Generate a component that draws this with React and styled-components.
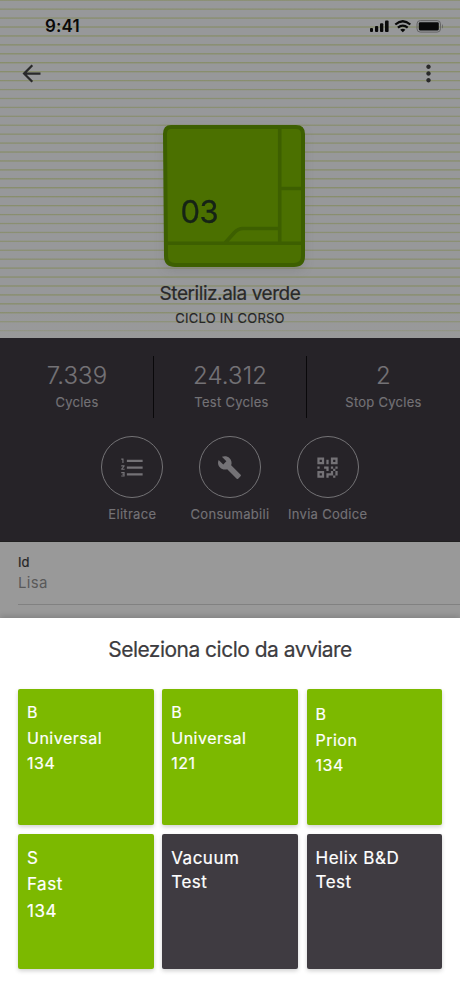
import React from "react";
import styled, { createGlobalStyle } from "styled-components";
import { MdFormatListNumbered, MdBuild, MdArrowBack, MdMoreVert } from "react-icons/md";

const GlobalStyle = createGlobalStyle`
  * { box-sizing: border-box; }
  body { margin: 0; font-family: Inter, "Liberation Sans", sans-serif; }
`;

const Screen = styled.main`
  display: flex;
  flex-direction: column;
  width: 460px;
  height: 996px;
  overflow: hidden;
  background: #999;
`;

const Hero = styled.section`
  height: 338px;
  flex: none;
  display: flex;
  flex-direction: column;
  align-items: center;
  background:
    linear-gradient(to bottom, transparent 310px, rgba(154, 154, 154, 0.75) 338px),
    repeating-linear-gradient(to bottom, #888e6c 0, #8d917a 0.7px, #97989a 1.4px, #97989a 8.1px, #888e6c 8.93px);
`;

const StatusBar = styled.header`
  align-self: stretch;
  height: 52px;
  padding: 0 17px 0 45px;
  display: flex;
  align-items: center;
  justify-content: space-between;
  color: #090909;
`;

const Clock = styled.time`
  font-size: 17px;
  line-height: 20px;
  font-weight: 600;
  letter-spacing: 0.1px;
`;

const StatusIcons = styled.svg`
  display: block;
  width: 75px;
  height: 14px;
`;

const NavBar = styled.nav`
  align-self: stretch;
  height: 43px;
  padding: 0 18px;
  display: flex;
  align-items: center;
  justify-content: space-between;
  color: #29292a;
`;

const NavButton = styled.button`
  display: flex;
  padding: 0;
  border: 0;
  background: none;
  color: inherit;
`;

const DeviceArt = styled.svg`
  display: block;
  width: 144px;
  height: 144px;
  margin: 29px 0 0 8px;
  filter: drop-shadow(0 4px 5px rgba(60, 60, 60, 0.13));
`;

const DeviceName = styled.h1`
  margin: 13px 0 0;
  font-size: 19px;
  line-height: 26px;
  font-weight: 400;
  letter-spacing: -0.44px;
  color: #292929;
  -webkit-text-stroke: 0.2px #292929;
`;

const DeviceState = styled.p`
  margin: 3px 0 0;
  font-size: 13px;
  line-height: 16px;
  letter-spacing: 0.25px;
  color: #252526;
  -webkit-text-stroke: 0.15px #252526;
`;

const Summary = styled.section`
  height: 204px;
  flex: none;
  background: #262328;
  color: #747276;
  border-bottom: 1px solid #202020;
`;

const Stats = styled.div`
  display: grid;
  grid-template-columns: 153px 153px 154px;
  padding-top: 18px;
`;

const Stat = styled.div`
  height: 62px;
  padding-top: 5px;
  text-align: center;
  border-left: 1px solid ${(p) => (p.$divided ? "#09080a" : "transparent")};
`;

const StatValue = styled.div`
  font-size: 24px;
  line-height: 30px;
  font-weight: 300;
  letter-spacing: 0.1px;
  -webkit-text-stroke: 0.15px #747276;
`;

const StatLabel = styled.div`
  margin-top: 3px;
  padding-left: ${(p) => p.$indent || 0}px;
  font-size: 13px;
  line-height: 16px;
  letter-spacing: 0.27px;
  -webkit-text-stroke: 0.15px #747276;
`;

const Actions = styled.div`
  display: grid;
  grid-template-columns: repeat(3, 97.7px);
  justify-content: center;
  margin-top: 18px;
`;

const Action = styled.button`
  display: flex;
  flex-direction: column;
  align-items: center;
  padding: 0;
  border: 0;
  background: none;
  color: inherit;
  font: inherit;
`;

const ActionCircle = styled.span`
  width: 62px;
  height: 62px;
  padding-right: ${(p) => p.$nudge || 0}px;
  border: 1px solid #747376;
  border-radius: 50%;
  display: grid;
  place-items: center;
`;

const ActionLabel = styled.span`
  margin-top: 8px;
  font-size: 13px;
  line-height: 16px;
  letter-spacing: 0.3px;
  white-space: nowrap;
  -webkit-text-stroke: 0.15px #747276;
`;

const Details = styled.section`
  margin-left: 18px;
  height: 63px;
  padding-top: 12px;
  border-bottom: 1px solid #818181;
`;

const FieldName = styled.div`
  font-size: 13px;
  line-height: 16px;
  color: #252526;
  -webkit-text-stroke: 0.2px #252526;
`;

const FieldValue = styled.div`
  margin-top: 4px;
  font-size: 15px;
  line-height: 18px;
  letter-spacing: 0.3px;
  color: #59595a;
`;

const Sheet = styled.section`
  height: 378px;
  margin-top: auto;
  flex: none;
  padding: 18px 18px 0;
  background: #fff;
  box-shadow: 0 -2px 6px rgba(0, 0, 0, 0.16);
`;

const SheetTitle = styled.h2`
  margin: 0;
  text-align: center;
  font-size: 21px;
  line-height: 28px;
  font-weight: 400;
  letter-spacing: -0.52px;
  color: #3d3c40;
  -webkit-text-stroke: 0.2px #3d3c40;
`;

const CycleGrid = styled.div`
  display: grid;
  grid-template-columns: repeat(3, 135.5px);
  grid-auto-rows: 135.6px;
  gap: 9px 8.75px;
  margin-top: 25px;
`;

const CycleCard = styled.button`
  display: flex;
  flex-direction: column;
  align-items: flex-start;
  border: 0;
  border-radius: 2px;
  padding: ${(p) => p.$top}px 9px 0;
  text-align: left;
  font-family: inherit;
  font-size: ${(p) => p.$size}px;
  line-height: ${(p) => p.$leading}px;
  letter-spacing: 0.5px;
  color: #fff;
  -webkit-text-stroke: 0.2px #fff;
  background: ${(p) => (p.$test ? "#3f3b41" : "#7cb900")};
  box-shadow: 0 2px 4px rgba(0, 0, 0, 0.18);
`;

const stats = [
  ["7.339", "Cycles"],
  ["24.312", "Test Cycles"],
  ["2", "Stop Cycles"],
];

const cycles = [
  { lines: ["B", "Universal", "134"], top: 11, size: 16, leading: 25.5 },
  { lines: ["B", "Universal", "121"], top: 11, size: 16, leading: 25.5 },
  { lines: ["B", "Prion", "134"], top: 13, size: 16, leading: 25.5 },
  { lines: ["S", "Fast", "134"], top: 11, size: 17, leading: 26.7 },
  { lines: ["Vacuum", "Test"], top: 12, size: 17, leading: 24.5, test: true },
  { lines: ["Helix B&D", "Test"], top: 12, size: 17, leading: 24.5, test: true },
];

const QrIcon = () => (
  <svg width="27" height="27" viewBox="0 0 24 24" fill="currentColor">
    <path d="M3 11h2v2H3zM11 5h2v4h-2zM9 11h4v4h-2v-2H9zM15 11h2v2h2v-2h2v2h-2v2h2v4h-2v2h-2v-2h-4v2h-2v-4h4v-2h2v-2h-2zM19 19v-4h-2v4zM15 3h6v6h-6zM17 5v2h2V5zM3 3h6v6H3zM5 5v2h2V5zM3 15h6v6H3zM5 17v2h2v-2z" fillRule="evenodd" />
  </svg>
);

const Status = () => (
  <StatusIcons viewBox="0 0 75 14" fill="currentColor">
    <rect x="2" y="9" width="3" height="4" rx="1" />
    <rect x="7" y="7" width="3.2" height="6" rx="1" />
    <rect x="12" y="4.3" width="3.3" height="8.7" rx="1" />
    <rect x="17" y="1.5" width="3.6" height="11.5" rx="1" />
    <path d="M27.3 5.5Q34.8-1 42.3 5.5M29.9 8.7q4.9-4.3 9.8 0" fill="none" stroke="currentColor" strokeWidth="2.2" />
    <path d="m32.2 10.7 2.6 2.5 2.6-2.5q-2.6-1.8-5.2 0Z" />
    <rect x="49" y="1.6" width="23.5" height="11.5" rx="3.3" fill="none" stroke="#656565" />
    <rect x="50.8" y="3.3" width="20" height="8.1" rx="1.3" />
    <path d="M74 5.3c1 .4 1.3 3.5 0 4.2Z" fill="#626262" />
  </StatusIcons>
);

const Device = () => (
  <DeviceArt viewBox="0 0 144 144" role="img" aria-label="03">
    <path d="M9 3h125q7 0 7 7v122q0 9-9 9H13q-9 0-9-9l-1-122q0-7 6-7Z" fill="#4b7000" stroke="#3d5f00" strokeWidth="4" />
    <path d="M117.7 4v116M118 64.5h23M4 119.3h136M63 119l9-10q4-4.5 9-4.5h36" fill="none" stroke="#3d5f00" strokeWidth="3.6" />
    <text x="18.5" y="99" fontFamily="Inter" fontSize="31" letterSpacing="-0.6" fill="#162316" stroke="#162316" strokeWidth="0.3">03</text>
  </DeviceArt>
);

export default function App() {
  return (
    <Screen>
      <GlobalStyle />
      <Hero>
        <StatusBar>
          <Clock>9:41</Clock>
          <Status />
        </StatusBar>
        <NavBar>
          <NavButton aria-label="Back"><MdArrowBack size={27} /></NavButton>
          <NavButton aria-label="More"><MdMoreVert size={27} /></NavButton>
        </NavBar>
        <Device />
        <DeviceName>Steriliz.ala verde</DeviceName>
        <DeviceState>CICLO IN CORSO</DeviceState>
      </Hero>
      <Summary>
        <Stats>
          {stats.map(([value, label], i) => (
            <Stat key={label} $divided={i > 0}>
              <StatValue>{value}</StatValue>
              <StatLabel $indent={i === 1 ? 3 : 0}>{label}</StatLabel>
            </Stat>
          ))}
        </Stats>
        <Actions>
          <Action><ActionCircle><MdFormatListNumbered size={27} /></ActionCircle><ActionLabel>Elitrace</ActionLabel></Action>
          <Action><ActionCircle $nudge={2}><MdBuild size={25} /></ActionCircle><ActionLabel>Consumabili</ActionLabel></Action>
          <Action><ActionCircle><QrIcon /></ActionCircle><ActionLabel>Invia Codice</ActionLabel></Action>
        </Actions>
      </Summary>
      <Details>
        <FieldName>Id</FieldName>
        <FieldValue>Lisa</FieldValue>
      </Details>
      <Sheet>
        <SheetTitle>Seleziona ciclo da avviare</SheetTitle>
        <CycleGrid>
          {cycles.map((c, i) => (
            <CycleCard key={i} $test={c.test} $top={c.top} $size={c.size} $leading={c.leading}>
              {c.lines.map((line) => <span key={line}>{line}</span>)}
            </CycleCard>
          ))}
        </CycleGrid>
      </Sheet>
    </Screen>
  );
}
